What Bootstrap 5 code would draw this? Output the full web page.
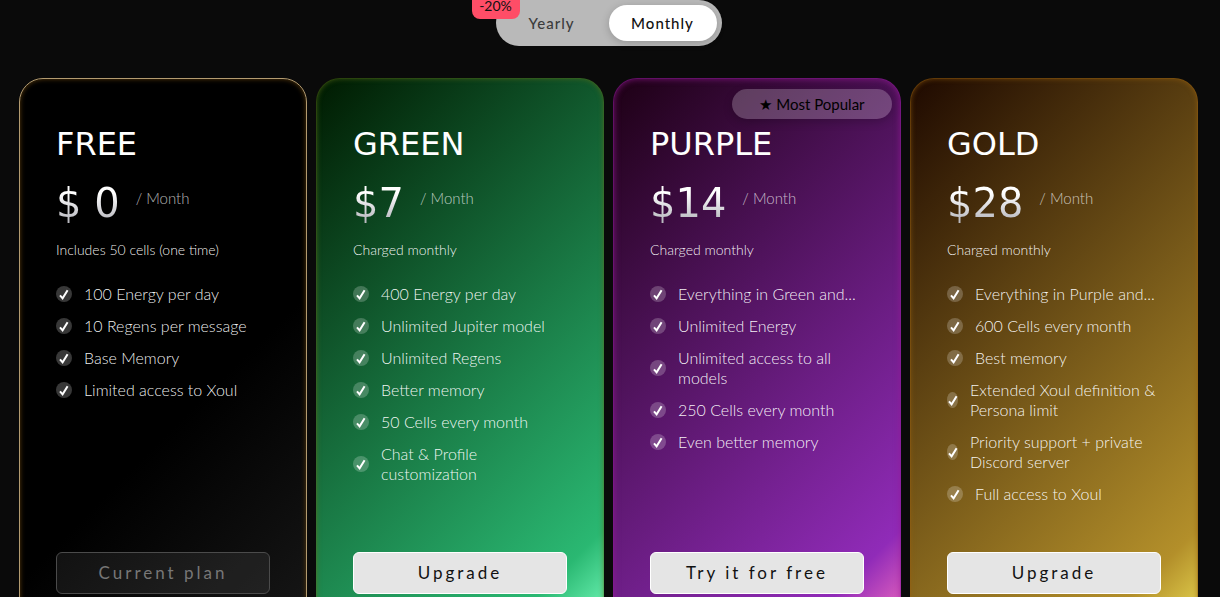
<!DOCTYPE html>
<html lang="en">
<head>
<meta charset="utf-8">
<meta name="viewport" content="width=device-width, initial-scale=1">
<title>Plans</title>
<link href="https://cdn.jsdelivr.net/npm/bootstrap@5.3.0/dist/css/bootstrap.min.css" rel="stylesheet">
<style>
  body { background: #0a0a0a; color: #fff; font-family: Lato, "Liberation Sans", sans-serif; }
  .pricing-page { padding: 0 22px 24px 19px; }
  .billing-toggle { display: grid; grid-template-columns: 102px 108px; gap: 6px; padding: 5px; background: #b9b9b9; border-radius: 24px; }
  .billing-toggle label { height: 36px; line-height: 36px; border-radius: 18px; text-align: center; font-size: 15px; font-weight: 500; letter-spacing: 1px; color: #3c3c3c; cursor: pointer; }
  .billing-toggle .btn-check:checked + label { background: #fff; color: #111; box-shadow: 0 2px 8px rgba(0,0,0,.2); }
  .discount-tag { top: -8px; left: -24px; width: 48px; height: 27px; line-height: 28px; border-radius: 8px; background: #ff4d67; color: #111; font-size: 14px; }
  .plan-grid { display: grid; grid-template-columns: repeat(4, minmax(0, 1fr)); gap: 9px; margin-top: 32px; }
  @media (max-width: 991px) { .plan-grid { grid-template-columns: repeat(2, minmax(0, 1fr)); } }
  @media (max-width: 575px) { .plan-grid { grid-template-columns: 1fr; } }
  .plan { min-height: 552px; padding: 35px 36px; border: 1px solid; border-radius: 24px; color: #fff; }
  .plan-free { background: linear-gradient(135deg, #000 60%, #171717) border-box; border-color: #b39b70; box-shadow: inset 0 0 5px #5a3b0c; }
  .plan-green { background: linear-gradient(135deg, #001a00, #2ab872 88%, #7affc0) border-box; border-color: rgba(90,110,25,.45); box-shadow: inset 0 0 5px rgba(90,110,25,.6); }
  .plan-purple { background: linear-gradient(135deg, #1d0014, #902bb8 88%, #f870c0) border-box; border-color: rgba(140,25,150,.6); box-shadow: inset 0 0 6px rgba(150,25,150,.7); }
  .plan-gold { background: linear-gradient(135deg, #1e0900, #b38f2a 88%, #ebdc54) border-box; border-color: rgba(150,95,15,.55); box-shadow: inset 0 0 5px rgba(150,95,15,.6); }
  .plan-name { font: 400 32px/60px "DejaVu Sans", sans-serif; margin-bottom: 4px; }
  .plan-price { font: 400 40px/50px "DejaVu Sans", sans-serif; background: linear-gradient(#fff 30%, #b9b9c0 85%); -webkit-background-clip: text; background-clip: text; color: transparent; }
  .plan-period { font-size: 15px; line-height: 40px; font-weight: 300; color: rgba(255,255,255,.7); }
  .plan-note { font-size: 14px; line-height: 20px; margin: 12px 0 24px; font-weight: 300; color: rgba(255,255,255,.95); }
  .plan-features { gap: 12px; font-size: 16px; line-height: 20px; font-weight: 300; color: rgba(255,255,255,.95); margin-bottom: 47px; }
  .plan-features li { display: flex; align-items: center; gap: 12px; }
  .tick { display: flex; justify-content: center; align-items: center; width: 16px; height: 16px; border-radius: 50%; background: rgba(255,255,255,.22); }
  .tick svg { flex: none; }
  .plan-btn { height: 42px; padding: 0; border-radius: 6px; font-size: 17px; letter-spacing: 3px; color: #111; background: #e5e5e5; border: 1px solid #fff; }
  .plan-btn:disabled { opacity: 1; color: #777; background: rgba(255,255,255,.07); border-color: #4b4b4b; }
  .popular-tag { top: 10px; right: 8px; width: 160px; height: 30px; line-height: 30px; background: rgba(255,255,255,.22); color: #000; font-size: 15px; box-shadow: 0 3px 10px rgba(0,0,0,.2); }
</style>
</head>
<body>
<svg class="d-none"><symbol id="check" viewBox="0 0 10 11"><path d="M1 6.3 3.6 9.3 8.6 1.2" fill="none" stroke="#fff" stroke-width="2"/></symbol></svg>
<main class="pricing-page">
  <div class="d-flex justify-content-center">
    <div class="billing-toggle position-relative">
      <div><input class="btn-check" type="radio" name="billing" id="yearly"><label class="d-block" for="yearly">Yearly</label></div>
      <div><input class="btn-check" type="radio" name="billing" id="monthly" checked><label class="d-block" for="monthly">Monthly</label></div>
      <span class="discount-tag position-absolute text-center">-20%</span>
    </div>
  </div>
  <div class="plan-grid">
    <section class="plan plan-free d-flex flex-column">
      <h2 class="plan-name">FREE</h2>
      <div class="d-flex gap-3"><span class="plan-price">$ 0</span><span class="plan-period">/ Month</span></div>
      <p class="plan-note">Includes 50 cells (one time)</p>
      <ul class="plan-features list-unstyled d-flex flex-column">
        <li><span class="tick"><svg width="10" height="11"><use href="#check"/></svg></span><span>100 Energy per day</span></li>
        <li><span class="tick"><svg width="10" height="11"><use href="#check"/></svg></span><span>10 Regens per message</span></li>
        <li><span class="tick"><svg width="10" height="11"><use href="#check"/></svg></span><span>Base Memory</span></li>
        <li><span class="tick"><svg width="10" height="11"><use href="#check"/></svg></span><span>Limited access to Xoul</span></li>
      </ul>
      <button class="btn plan-btn w-100 mt-auto" type="button" disabled>Current plan</button>
    </section>
    <section class="plan plan-green d-flex flex-column">
      <h2 class="plan-name">GREEN</h2>
      <div class="d-flex gap-3"><span class="plan-price">$7</span><span class="plan-period">/ Month</span></div>
      <p class="plan-note">Charged monthly</p>
      <ul class="plan-features list-unstyled d-flex flex-column">
        <li><span class="tick"><svg width="10" height="11"><use href="#check"/></svg></span><span>400 Energy per day</span></li>
        <li><span class="tick"><svg width="10" height="11"><use href="#check"/></svg></span><span>Unlimited Jupiter model</span></li>
        <li><span class="tick"><svg width="10" height="11"><use href="#check"/></svg></span><span>Unlimited Regens</span></li>
        <li><span class="tick"><svg width="10" height="11"><use href="#check"/></svg></span><span>Better memory</span></li>
        <li><span class="tick"><svg width="10" height="11"><use href="#check"/></svg></span><span>50 Cells every month</span></li>
        <li><span class="tick"><svg width="10" height="11"><use href="#check"/></svg></span><span>Chat &amp; Profile<br>customization</span></li>
      </ul>
      <button class="btn plan-btn w-100 mt-auto" type="button">Upgrade</button>
    </section>
    <section class="plan plan-purple d-flex flex-column position-relative">
      <span class="popular-tag position-absolute rounded-pill text-center">★ Most Popular</span>
      <h2 class="plan-name">PURPLE</h2>
      <div class="d-flex gap-3"><span class="plan-price">$14</span><span class="plan-period">/ Month</span></div>
      <p class="plan-note">Charged monthly</p>
      <ul class="plan-features list-unstyled d-flex flex-column">
        <li><span class="tick"><svg width="10" height="11"><use href="#check"/></svg></span><span class="text-nowrap">Everything in Green and...</span></li>
        <li><span class="tick"><svg width="10" height="11"><use href="#check"/></svg></span><span>Unlimited Energy</span></li>
        <li><span class="tick"><svg width="10" height="11"><use href="#check"/></svg></span><span>Unlimited access to all<br>models</span></li>
        <li><span class="tick"><svg width="10" height="11"><use href="#check"/></svg></span><span>250 Cells every month</span></li>
        <li><span class="tick"><svg width="10" height="11"><use href="#check"/></svg></span><span>Even better memory</span></li>
      </ul>
      <button class="btn plan-btn w-100 mt-auto" type="button">Try it for free</button>
    </section>
    <section class="plan plan-gold d-flex flex-column">
      <h2 class="plan-name">GOLD</h2>
      <div class="d-flex gap-3"><span class="plan-price">$28</span><span class="plan-period">/ Month</span></div>
      <p class="plan-note">Charged monthly</p>
      <ul class="plan-features list-unstyled d-flex flex-column">
        <li><span class="tick"><svg width="10" height="11"><use href="#check"/></svg></span><span class="text-nowrap">Everything in Purple and...</span></li>
        <li><span class="tick"><svg width="10" height="11"><use href="#check"/></svg></span><span>600 Cells every month</span></li>
        <li><span class="tick"><svg width="10" height="11"><use href="#check"/></svg></span><span>Best memory</span></li>
        <li><span class="tick"><svg width="10" height="11"><use href="#check"/></svg></span><span>Extended Xoul definition &amp; Persona limit</span></li>
        <li><span class="tick"><svg width="10" height="11"><use href="#check"/></svg></span><span>Priority support + private Discord server</span></li>
        <li><span class="tick"><svg width="10" height="11"><use href="#check"/></svg></span><span>Full access to Xoul</span></li>
      </ul>
      <button class="btn plan-btn w-100 mt-auto" type="button">Upgrade</button>
    </section>
  </div>
</main>
<script src="https://cdn.jsdelivr.net/npm/bootstrap@5.3.0/dist/js/bootstrap.bundle.min.js"></script>
</body>
</html>
